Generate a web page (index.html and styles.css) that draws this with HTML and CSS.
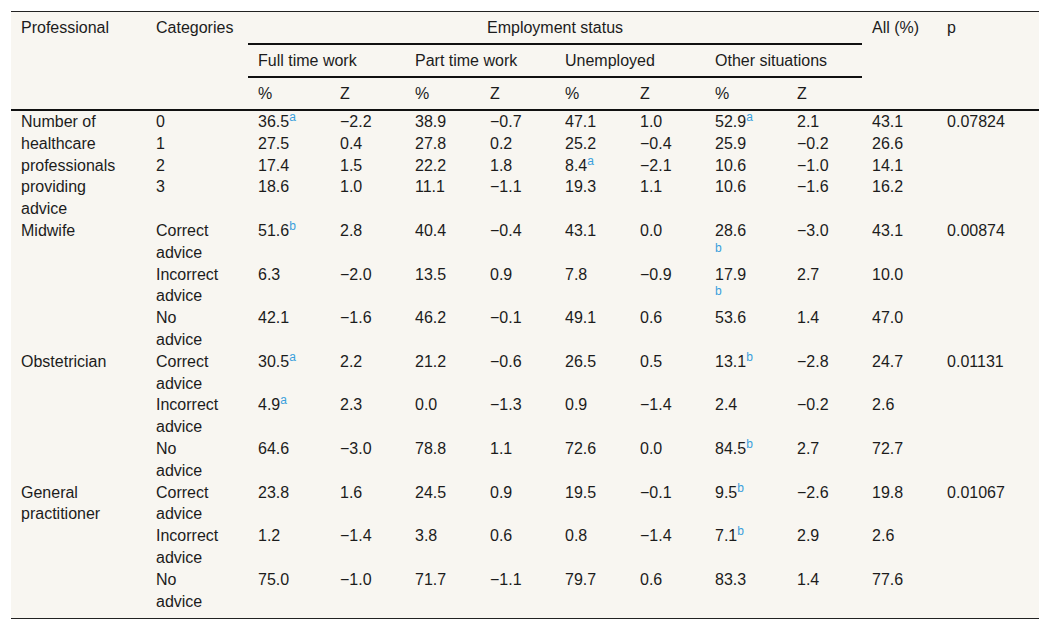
FILE: index.html
```html
<!DOCTYPE html>
<html lang="en">
<head>
<meta charset="utf-8">
<title>Table</title>
<link rel="stylesheet" href="styles.css">
</head>
<body>
<div class="wrap">
<table class="data">
<colgroup>
<col class="c-prof"><col class="c-cat">
<col class="c-w"><col class="c-n"><col class="c-n"><col class="c-n"><col class="c-n"><col class="c-n"><col class="c-w"><col class="c-n">
<col class="c-n"><col class="c-p">
</colgroup>
<thead>
<tr>
<th rowspan="3" class="first">Professional</th>
<th rowspan="3" class="cat">Categories</th>
<th colspan="8" class="group">Employment status</th>
<th rowspan="3">All (%)</th>
<th rowspan="3">p</th>
</tr>
<tr>
<th colspan="2" class="sub">Full time work</th>
<th colspan="2" class="sub">Part time work</th>
<th colspan="2" class="sub">Unemployed</th>
<th colspan="2" class="sub">Other situations</th>
</tr>
<tr>
<th>%</th><th>Z</th><th>%</th><th>Z</th><th>%</th><th>Z</th><th>%</th><th>Z</th>
</tr>
</thead>
<tbody>
<tr>
<td rowspan="4" class="first">Number of healthcare professionals providing advice</td>
<td class="cat">0</td>
<td>36.5<sup class="fn">a</sup></td><td>−2.2</td><td>38.9</td><td>−0.7</td><td>47.1</td><td>1.0</td><td>52.9<sup class="fn">a</sup></td><td>2.1</td><td>43.1</td>
<td rowspan="4">0.07824</td>
</tr>
<tr>
<td class="cat">1</td>
<td>27.5</td><td>0.4</td><td>27.8</td><td>0.2</td><td>25.2</td><td>−0.4</td><td>25.9</td><td>−0.2</td><td>26.6</td>
</tr>
<tr>
<td class="cat">2</td>
<td>17.4</td><td>1.5</td><td>22.2</td><td>1.8</td><td>8.4<sup class="fn">a</sup></td><td>−2.1</td><td>10.6</td><td>−1.0</td><td>14.1</td>
</tr>
<tr class="tall">
<td class="cat">3</td>
<td>18.6</td><td>1.0</td><td>11.1</td><td>−1.1</td><td>19.3</td><td>1.1</td><td>10.6</td><td>−1.6</td><td>16.2</td>
</tr>

<tr>
<td rowspan="3" class="first">Midwife</td>
<td class="cat">Correct advice</td>
<td>51.6<sup class="fn">b</sup></td><td>2.8</td><td>40.4</td><td>−0.4</td><td>43.1</td><td>0.0</td><td>28.6<br><sup class="fn">b</sup></td><td>−3.0</td><td>43.1</td>
<td rowspan="3">0.00874</td>
</tr>
<tr>
<td class="cat">Incorrect advice</td>
<td>6.3</td><td>−2.0</td><td>13.5</td><td>0.9</td><td>7.8</td><td>−0.9</td><td>17.9<br><sup class="fn">b</sup></td><td>2.7</td><td>10.0</td>
</tr>
<tr>
<td class="cat">No advice</td>
<td>42.1</td><td>−1.6</td><td>46.2</td><td>−0.1</td><td>49.1</td><td>0.6</td><td>53.6</td><td>1.4</td><td>47.0</td>
</tr>

<tr>
<td rowspan="3" class="first">Obstetrician</td>
<td class="cat">Correct advice</td>
<td>30.5<sup class="fn">a</sup></td><td>2.2</td><td>21.2</td><td>−0.6</td><td>26.5</td><td>0.5</td><td>13.1<sup class="fn">b</sup></td><td>−2.8</td><td>24.7</td>
<td rowspan="3">0.01131</td>
</tr>
<tr>
<td class="cat">Incorrect advice</td>
<td>4.9<sup class="fn">a</sup></td><td>2.3</td><td>0.0</td><td>−1.3</td><td>0.9</td><td>−1.4</td><td>2.4</td><td>−0.2</td><td>2.6</td>
</tr>
<tr>
<td class="cat">No advice</td>
<td>64.6</td><td>−3.0</td><td>78.8</td><td>1.1</td><td>72.6</td><td>0.0</td><td>84.5<sup class="fn">b</sup></td><td>2.7</td><td>72.7</td>
</tr>

<tr>
<td rowspan="3" class="first">General practitioner</td>
<td class="cat">Correct advice</td>
<td>23.8</td><td>1.6</td><td>24.5</td><td>0.9</td><td>19.5</td><td>−0.1</td><td>9.5<sup class="fn">b</sup></td><td>−2.6</td><td>19.8</td>
<td rowspan="3">0.01067</td>
</tr>
<tr>
<td class="cat">Incorrect advice</td>
<td>1.2</td><td>−1.4</td><td>3.8</td><td>0.6</td><td>0.8</td><td>−1.4</td><td>7.1<sup class="fn">b</sup></td><td>2.9</td><td>2.6</td>
</tr>
<tr class="last">
<td class="cat">No advice</td>
<td>75.0</td><td>−1.0</td><td>71.7</td><td>−1.1</td><td>79.7</td><td>0.6</td><td>83.3</td><td>1.4</td><td>77.6</td>
</tr>
</tbody>
</table>
</div>
</body>
</html>
```

FILE: styles.css
```css
html, body {
  margin: 0;
  padding: 0;
  background: #ffffff;
}

.wrap {
  padding: 11px;
}

.data {
  table-layout: fixed;
  width: 1028px;
  border-collapse: collapse;
  background: #f8f6f1;
  color: #1c1c1c;
  font-family: "Liberation Sans", Arial, sans-serif;
  font-size: 16px;
  border-top: 1px solid #222222;
  border-bottom: 1px solid #222222;
}

.c-prof { width: 135px; }
.c-cat { width: 102px; }
.c-w { width: 82px; }
.c-n { width: 75px; }
.c-p { width: 102px; }

.data th {
  font-weight: normal;
  text-align: left;
  vertical-align: top;
  line-height: 22px;
  padding: 5px 10px 4px 10px;
  white-space: nowrap;
}

.data th.group {
  text-align: center;
  border-bottom: 2px solid #111111;
}

.data th.sub {
  border-bottom: 2px solid #111111;
}

.data thead {
  border-bottom: 2px solid #111111;
}

.data td {
  text-align: left;
  vertical-align: top;
  line-height: 21.8px;
  padding: 0 10px;
}

.data td.first {
  padding-right: 20px;
}

.data td.cat {
  padding-right: 25px;
}

.data tr.tall {
  height: 43.6px;
}

.data tr.last td {
  padding-bottom: 6px;
}

.fn {
  color: #3a9fdc;
  font-size: 12px;
  line-height: 0;
  vertical-align: super;
}
```
